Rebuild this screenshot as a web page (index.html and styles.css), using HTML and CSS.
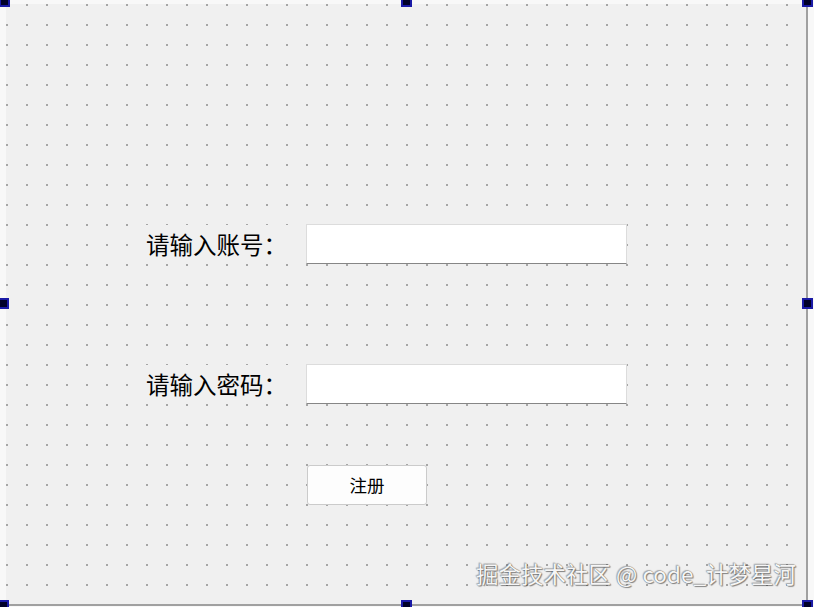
FILE: index.html
```html
<!DOCTYPE html>
<html lang="zh-CN">
<head>
<meta charset="utf-8">
<title>Form</title>
<link rel="stylesheet" href="styles.css">
</head>
<body>
<div class="form">
  <div class="row">
    <div class="label">请输入账号：</div>
    <div class="input"></div>
  </div>
  <div class="row row-second">
    <div class="label">请输入密码：</div>
    <div class="input"></div>
  </div>
  <div class="button-row">
    <div class="button">注册</div>
  </div>
</div>

<span class="handle h-tl"></span>
<span class="handle h-tm"></span>
<span class="handle h-tr"></span>
<span class="handle h-ml"></span>
<span class="handle h-mr"></span>
<span class="handle h-bl"></span>
<span class="handle h-bm"></span>
<span class="handle h-br"></span>

<div class="watermark">掘金技术社区 @ code_计梦星河</div>
</body>
</html>
```
FILE: styles.css
```css
html, body {
  margin: 0;
  padding: 0;
}

body {
  width: 814px;
  height: 607px;
  overflow: hidden;
  position: relative;
  background: #f8f8f8;
  font-family: "Noto Sans CJK SC", "Noto Sans", sans-serif;
}

.form {
  box-sizing: border-box;
  margin: 4px 0 0 6px;
  width: 802px;
  height: 602px;
  border-right: 2px solid #a0a0a0;
  border-bottom: 2px solid #a0a0a0;
  background-color: #f0f0f0;
  background-image: conic-gradient(from 270deg at 2px 2px, #a6a6a6 25%, transparent 0);
  background-size: 20px 20px;
  background-position: 0 0;
  padding: 220px 0 0 134px;
  display: flex;
  flex-direction: column;
  align-items: flex-start;
}

.row {
  display: flex;
  align-items: center;
  height: 40px;
}

.row-second {
  margin-top: 100px;
}

.label {
  box-sizing: border-box;
  width: 166px;
  height: 38px;
  padding-left: 6px;
  background: #f0f0f0;
  font-size: 23.5px;
  line-height: 38px;
  color: #000;
  white-space: nowrap;
}

.input {
  box-sizing: border-box;
  width: 321px;
  height: 40px;
  background: #fff;
  border: 1px solid #dcdcdc;
  border-bottom: 1px solid #868686;
}

.button-row {
  margin-top: 61px;
  margin-left: 167px;
}

.button {
  box-sizing: border-box;
  width: 120px;
  height: 40px;
  border: 1px solid #cbcbcb;
  border-radius: 3px;
  background: #fdfdfd;
  font-size: 17.5px;
  line-height: 38px;
  text-align: center;
  color: #000;
}

.handle {
  position: absolute;
  box-sizing: border-box;
  width: 11px;
  height: 11px;
  background: #000028;
  border: 2px solid #1a1aa6;
}

.h-tl { left: -1px; top: -4px; }
.h-tm { left: 401px; top: -4px; }
.h-tr { left: 802px; top: -4px; }
.h-ml { left: -2px; top: 298px; }
.h-mr { left: 802px; top: 298px; }
.h-bl { left: -2px; top: 600px; }
.h-bm { left: 401px; top: 600px; }
.h-br { left: 802px; top: 600px; }

.watermark {
  position: absolute;
  right: 18px;
  top: 558px;
  font-size: 22.5px;
  line-height: 30px;
  color: #f6f6f6;
  white-space: nowrap;
  text-shadow: 0 0 1px #5a5a5a, 1px 1px 1px rgba(0, 0, 0, 0.45), -1px -1px 1px rgba(0, 0, 0, 0.25);
}
```
